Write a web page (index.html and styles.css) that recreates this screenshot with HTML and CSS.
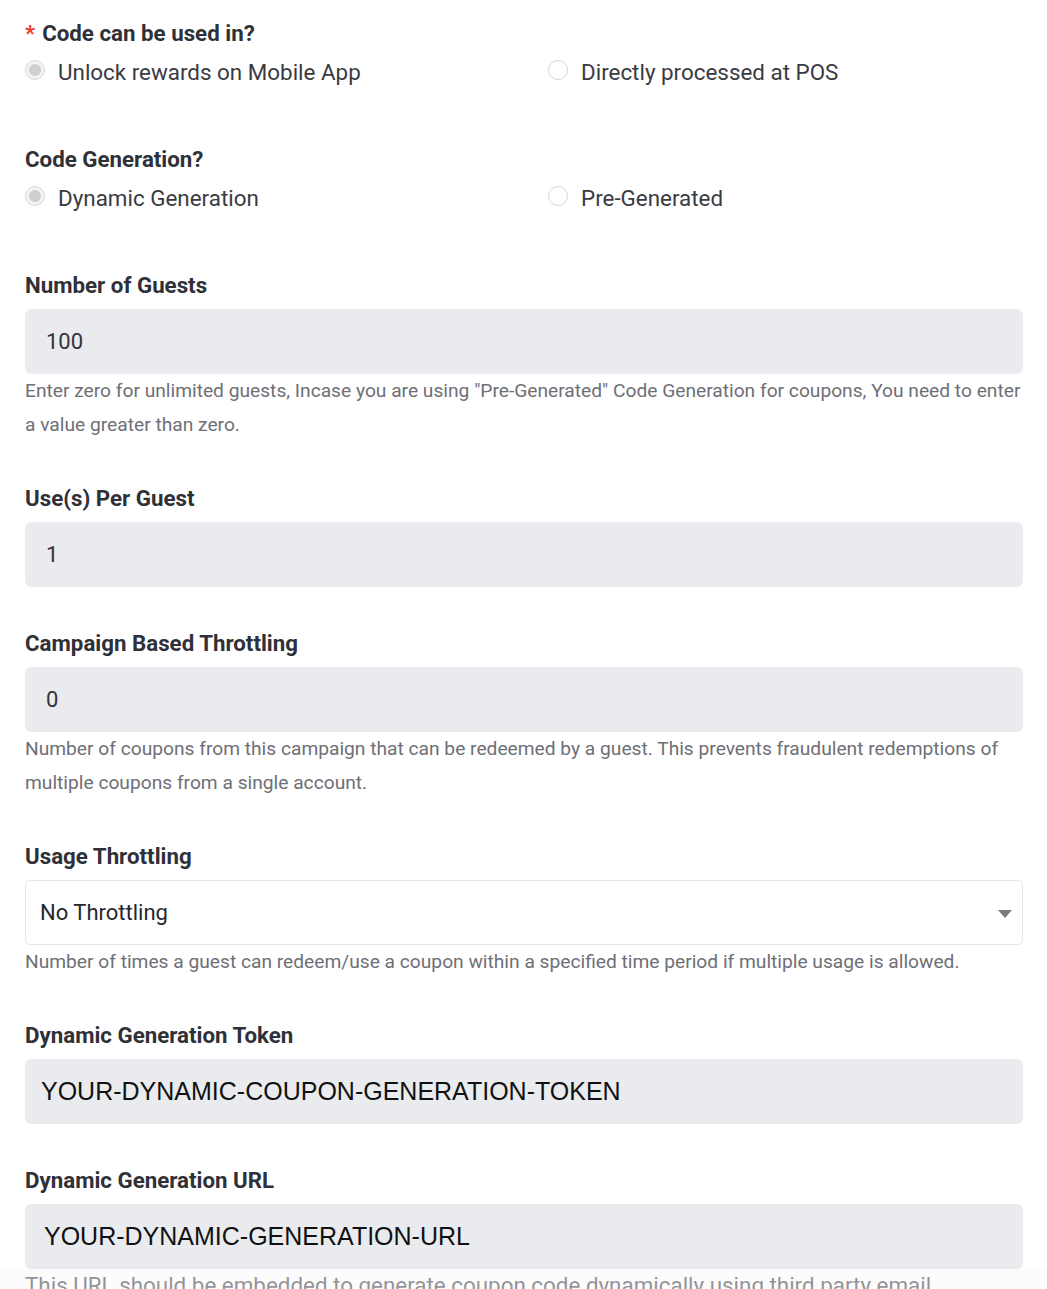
FILE: index.html
```html
<!DOCTYPE html>
<html lang="en">
<head>
<meta charset="utf-8">
<title>Coupon settings</title>
<link rel="stylesheet" href="styles.css">
</head>
<body>
<form class="form">
  <div class="group group-radio">
    <div class="label"><span class="req">*</span>Code can be used in?</div>
    <div class="radio-row">
      <label class="radio"><span class="dot checked"></span>Unlock rewards on Mobile App</label>
      <label class="radio"><span class="dot"></span>Directly processed at POS</label>
    </div>
  </div>

  <div class="group group-radio">
    <div class="label">Code Generation?</div>
    <div class="radio-row">
      <label class="radio"><span class="dot checked"></span>Dynamic Generation</label>
      <label class="radio"><span class="dot"></span>Pre-Generated</label>
    </div>
  </div>

  <div class="group">
    <div class="label">Number of Guests</div>
    <div class="input">100</div>
    <div class="help">Enter zero for unlimited guests, Incase you are using "Pre-Generated" Code Generation for coupons, You need to enter a value greater than zero.</div>
  </div>

  <div class="group">
    <div class="label">Use(s) Per Guest</div>
    <div class="input">1</div>
  </div>

  <div class="group">
    <div class="label">Campaign Based Throttling</div>
    <div class="input">0</div>
    <div class="help">Number of coupons from this campaign that can be redeemed by a guest. This prevents fraudulent redemptions of multiple coupons from a single account.</div>
  </div>

  <div class="group">
    <div class="label">Usage Throttling</div>
    <div class="select">No Throttling<span class="caret"></span></div>
    <div class="help">Number of times a guest can redeem/use a coupon within a specified time period if multiple usage is allowed.</div>
  </div>

  <div class="group">
    <div class="label">Dynamic Generation Token</div>
    <div class="input input-code input-token">YOUR-DYNAMIC-COUPON-GENERATION-TOKEN</div>
  </div>

  <div class="group">
    <div class="label">Dynamic Generation URL</div>
    <div class="input input-code input-url">YOUR-DYNAMIC-GENERATION-URL</div>
    <div class="help help-large">This URL should be embedded to generate coupon code dynamically using third party email platforms.</div>
  </div>
</form>
<div class="bottom-fade"></div>
</body>
</html>
```

FILE: styles.css
```css
html, body {
  margin: 0;
  background: #ffffff;
}

body {
  padding: 19px 24px 0 25px;
  font-family: Roboto, "Liberation Sans", Arial, sans-serif;
  color: #303139;
}

.form {
  display: flex;
  flex-direction: column;
}

.group {
  margin-bottom: 42px;
}

.group-radio {
  margin-bottom: 58px;
}

.label {
  font-size: 22.3px;
  line-height: 28px;
  font-weight: 700;
  color: #2f3038;
  margin-bottom: 10px;
}

.req {
  color: #e8402a;
  margin-right: 7px;
}

.radio-row {
  display: grid;
  grid-template-columns: 523px 1fr;
}

.radio {
  display: flex;
  align-items: center;
  font-size: 22.4px;
  line-height: 30px;
  color: #3a3b42;
}

.dot {
  box-sizing: border-box;
  width: 20px;
  height: 20px;
  border-radius: 50%;
  border: 1px solid #d6d6d6;
  background: #ffffff;
  margin-right: 13px;
  position: relative;
  top: -2px;
  flex: none;
}

.dot.checked {
  background: #f3f3f3;
  border-color: #d9d9d9;
}

.dot.checked::after {
  content: "";
  position: absolute;
  left: 3px;
  top: 3px;
  width: 12px;
  height: 12px;
  border-radius: 50%;
  background: #cfcfcf;
}

.input {
  box-sizing: border-box;
  height: 65px;
  display: flex;
  align-items: center;
  padding: 0 21px;
  background: #eaebef;
  border-radius: 6px;
  font-size: 22px;
  color: #333339;
}

.input-code {
  font-family: "Liberation Sans", Arial, sans-serif;
  font-size: 25px;
  color: #111111;
}

.input-token {
  padding-left: 16px;
}

.input-url {
  padding-left: 19px;
}

.select {
  box-sizing: border-box;
  height: 65px;
  display: flex;
  align-items: center;
  justify-content: space-between;
  padding: 0 10px 0 14px;
  background: #ffffff;
  border: 1px solid #e6e6ef;
  border-radius: 5px;
  font-size: 22px;
  color: #26272c;
}

.caret {
  width: 0;
  height: 0;
  border-left: 7px solid transparent;
  border-right: 7px solid transparent;
  border-top: 8px solid #7a7a7a;
  margin-top: 3px;
}

.help {
  font-size: 19.2px;
  line-height: 34px;
  color: #6e6f76;
}

.help-large {
  font-size: 22.4px;
  line-height: 30px;
  padding-top: 1px;
  color: #5f6067;
}

.bottom-fade {
  position: fixed;
  left: 0;
  right: 0;
  bottom: 0;
  height: 17px;
  background: rgba(246, 246, 246, 0.35);
  box-shadow: 0 -2px 6px rgba(0, 0, 0, 0.03);
}
```
